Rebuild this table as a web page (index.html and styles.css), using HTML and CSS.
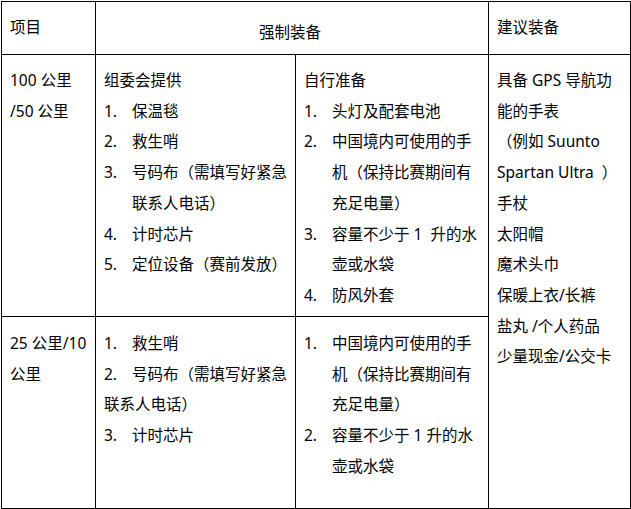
FILE: index.html
```html
<!DOCTYPE html>
<html lang="zh">
<head>
<meta charset="utf-8">
<title>装备</title>
<link rel="stylesheet" href="styles.css">
</head>
<body>
<div class="page">
<table class="gear">
  <colgroup>
    <col class="c1"><col class="c2"><col class="c3"><col class="c4">
  </colgroup>
  <tr class="head">
    <td class="h-left">项目</td>
    <td colspan="2" class="h-mid">强制装备</td>
    <td class="h-left">建议装备</td>
  </tr>
  <tr class="r1">
    <td><p>100 公里</p><p>/50 公里</p></td>
    <td>
      <p>组委会提供</p>
      <p class="li"><span class="n">1.</span>保温毯</p>
      <p class="li"><span class="n">2.</span>救生哨</p>
      <p class="li"><span class="n">3.</span>号码布（需填写好紧急<br>联系人电话）</p>
      <p class="li"><span class="n">4.</span>计时芯片</p>
      <p class="li"><span class="n">5.</span>定位设备（赛前发放）</p>
    </td>
    <td>
      <p>自行准备</p>
      <p class="li"><span class="n">1.</span>头灯及配套电池</p>
      <p class="li"><span class="n">2.</span>中国境内可使用的手<br>机（保持比赛期间有<br>充足电量）</p>
      <p class="li"><span class="n">3.</span>容量不少于 1&nbsp; 升的水<br>壶或水袋</p>
      <p class="li"><span class="n">4.</span>防风外套</p>
    </td>
    <td rowspan="2" class="last">
      <p>具备 GPS 导航功</p>
      <p>能的手表</p>
      <p>（例如 Suunto</p>
      <p>Spartan Ultra&nbsp; ）</p>
      <p>手杖</p>
      <p>太阳帽</p>
      <p>魔术头巾</p>
      <p>保暖上衣/长裤</p>
      <p>盐丸 /个人药品</p>
      <p>少量现金/公交卡</p>
    </td>
  </tr>
  <tr class="r2">
    <td><p>25 公里/10</p><p>公里</p></td>
    <td>
      <p class="li"><span class="n">1.</span>救生哨</p>
      <p class="plain"><span class="n">2.</span>号码布（需填写好紧急<br>联系人电话）</p>
      <p class="li"><span class="n">3.</span>计时芯片</p>
    </td>
    <td>
      <p class="li"><span class="n">1.</span>中国境内可使用的手<br>机（保持比赛期间有<br>充足电量）</p>
      <p class="li"><span class="n">2.</span>容量不少于 1 升的水<br>壶或水袋</p>
    </td>
  </tr>
</table>
</div>
</body>
</html>
```
FILE: styles.css
```css
html, body {
  margin: 0;
  padding: 0;
  background: #fff;
}
.page {
  padding: 1px 0 0 1px;
}
.gear {
  border-collapse: collapse;
  table-layout: fixed;
  width: 629px;
  font-family: "Noto Sans", "Noto Sans CJK SC", sans-serif;
  font-size: 15.5px;
  color: #000;
  line-height: 30.7px;
}
.c1 { width: 94px; }
.c2 { width: 200px; }
.c3 { width: 193px; }
.c4 { width: 142px; }
.gear td {
  border: 1px solid #000;
  vertical-align: top;
  padding: 10px 4px 0 8px;
}
.gear p {
  margin: 0;
  white-space: nowrap;
}
.head { height: 53px; }
.head td { padding-top: 10px; }
.head .h-mid { text-align: center; padding-top: 15px; padding-left: 0; }
.r1 { height: 262px; }
.r2 { height: 192px; }
.r2 td { padding-top: 11px; }
.li {
  padding-left: 28px;
  text-indent: -28px;
}
.n {
  display: inline-block;
  width: 28px;
  text-indent: 0;
}
```
